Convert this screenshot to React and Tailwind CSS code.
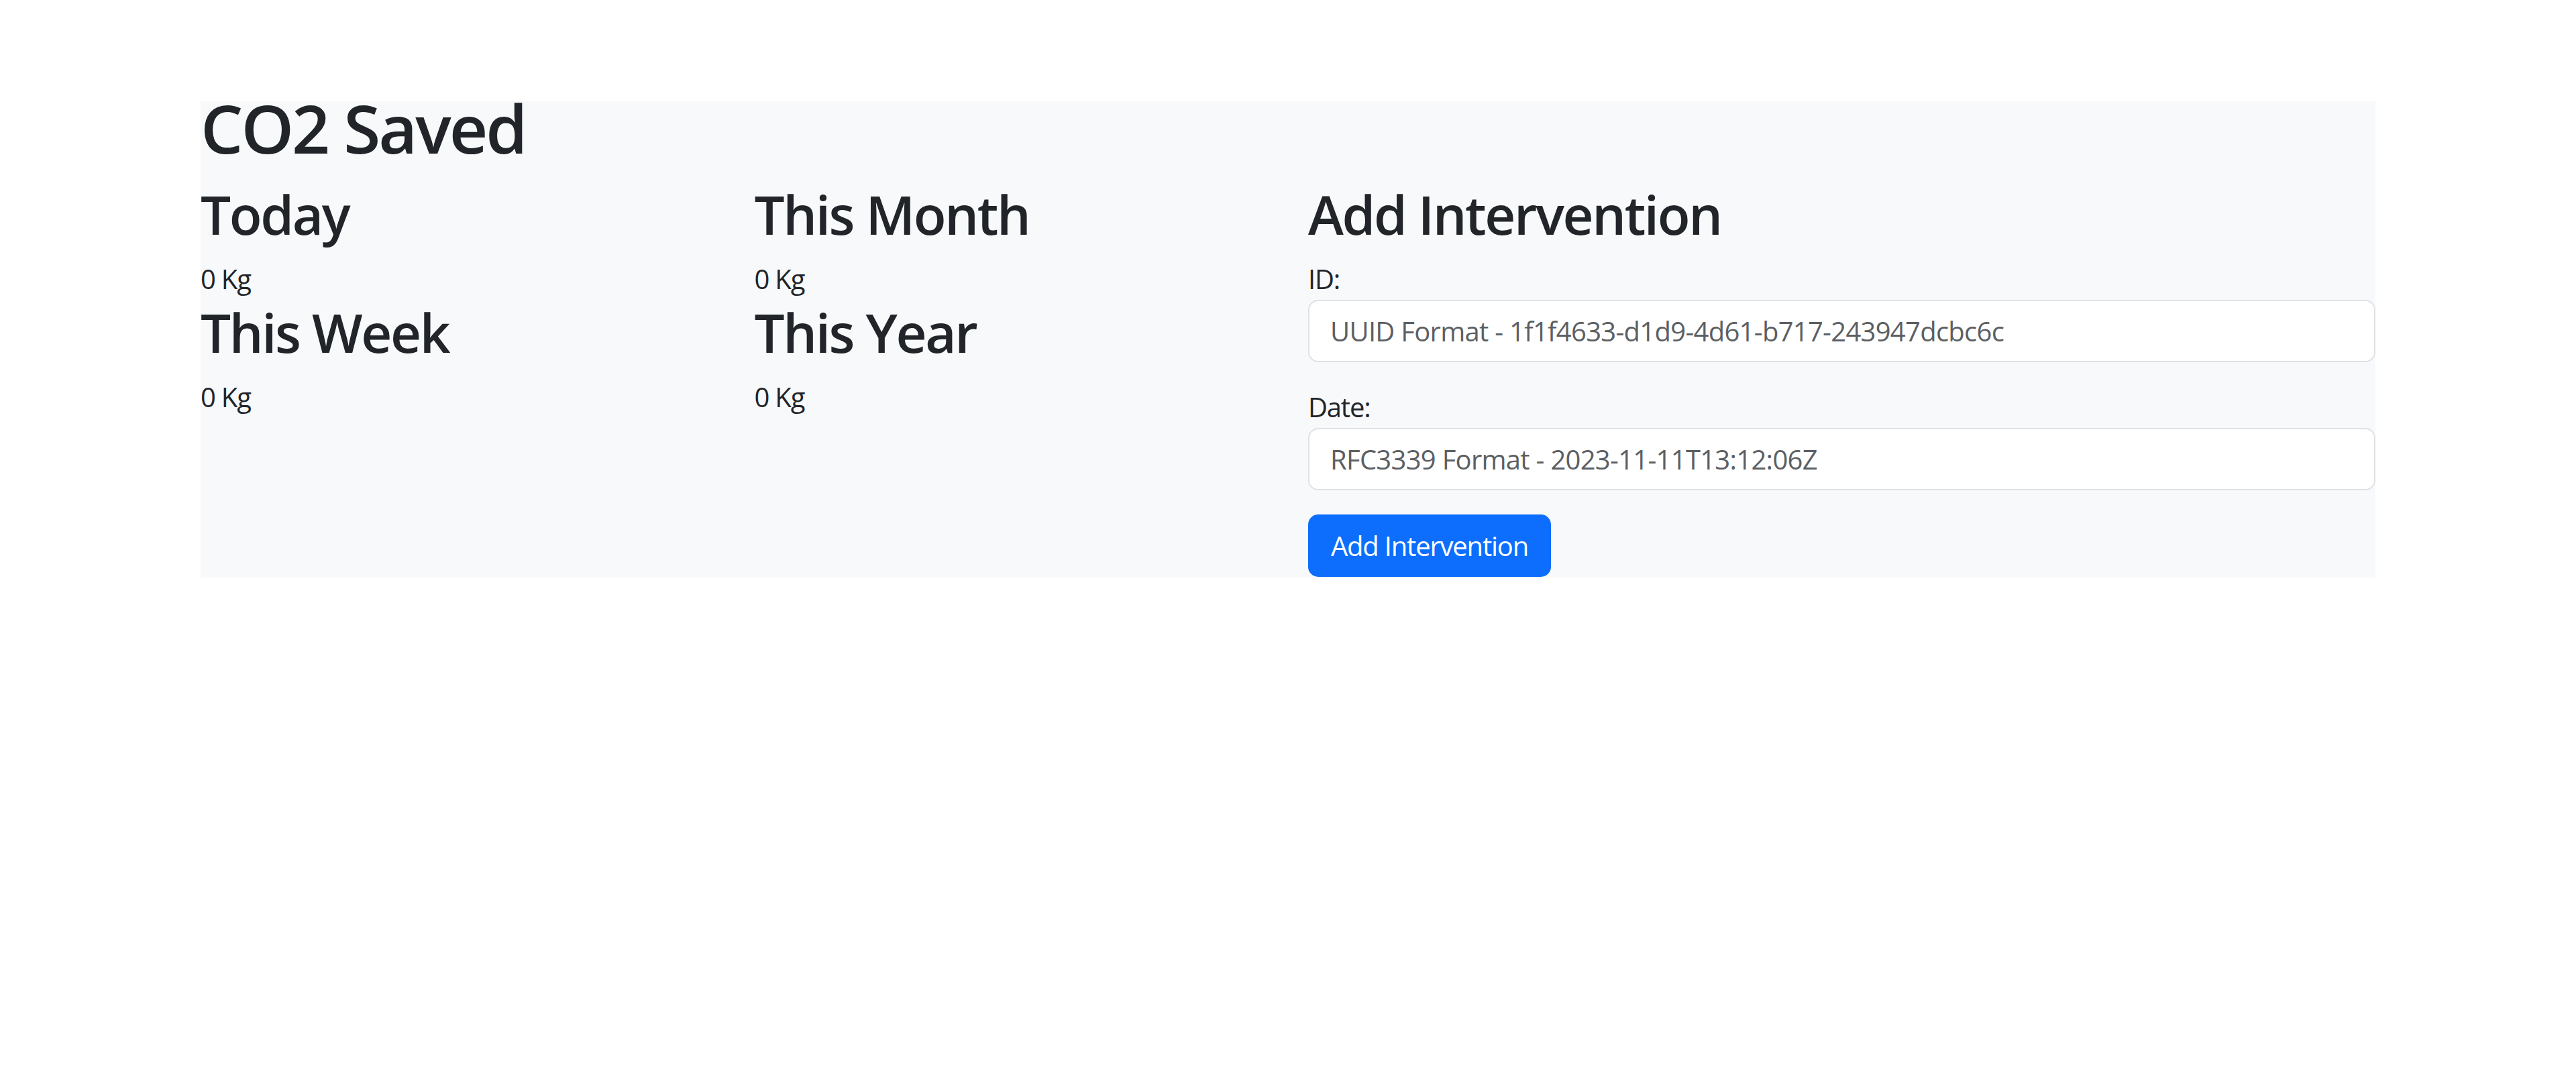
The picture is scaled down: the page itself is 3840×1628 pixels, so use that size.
import React from "react";

const stats = [
  [
    { label: "Today", value: "0 Kg" },
    { label: "This Week", value: "0 Kg" },
  ],
  [
    { label: "This Month", value: "0 Kg" },
    { label: "This Year", value: "0 Kg" },
  ],
];

const Stat = ({ label, value }) => (
  <div>
    <h2 className="text-[80px] leading-[96px] font-semibold tracking-[-0.03em] mb-[18px]">{label}</h2>
    <p className="text-[40px] leading-[62px] tracking-[-0.03em]">{value}</p>
  </div>
);

const Field = ({ label, placeholder }) => (
  <div>
    <label className="block text-[40px] leading-[62px] tracking-[-0.03em]">{label}</label>
    <input
      type="text"
      placeholder={placeholder}
      className="block w-full h-[93px] px-[31px] bg-white border-2 border-[#dee2e6] rounded-[15px] text-[40px] tracking-[-0.018em] text-[#212529] placeholder:text-[#5c5f63] outline-none"
    />
  </div>
);

export default function App() {
  return (
    <div className="min-h-screen bg-white pt-[151px] text-[#212529]" style={{ fontFamily: '"Open Sans", "Noto Sans", sans-serif' }}>
      <div className="mx-auto w-[3242px] bg-[#f8f9fa] pt-[4px] pb-[1px]">
        {/* title */}
        <h1 className="text-[100px] leading-[70px] font-semibold tracking-[-0.03em] mb-[46px]">CO2 Saved</h1>

        <div className="grid grid-cols-[825.5px_825.5px_1fr]">
          {stats.map((col, i) => (
            <div key={i}>
              {col.map((s) => (
                <Stat key={s.label} {...s} />
              ))}
            </div>
          ))}

          {/* form */}
          <div>
            <h2 className="text-[80px] leading-[96px] font-semibold tracking-[-0.03em] mb-[18px]">Add Intervention</h2>
            <div className="flex flex-col gap-[36px]">
              <Field label="ID:" placeholder="UUID Format - 1f1f4633-d1d9-4d61-b717-243947dcbc6c" />
              <Field label="Date:" placeholder="RFC3339 Format - 2023-11-11T13:12:06Z" />
              <div>
                <button className="h-[93px] w-[362px] rounded-[15px] bg-[#0d6efd] text-white text-[40px] tracking-[-0.03em]">
                  Add Intervention
                </button>
              </div>
            </div>
          </div>
        </div>
      </div>
    </div>
  );
}
